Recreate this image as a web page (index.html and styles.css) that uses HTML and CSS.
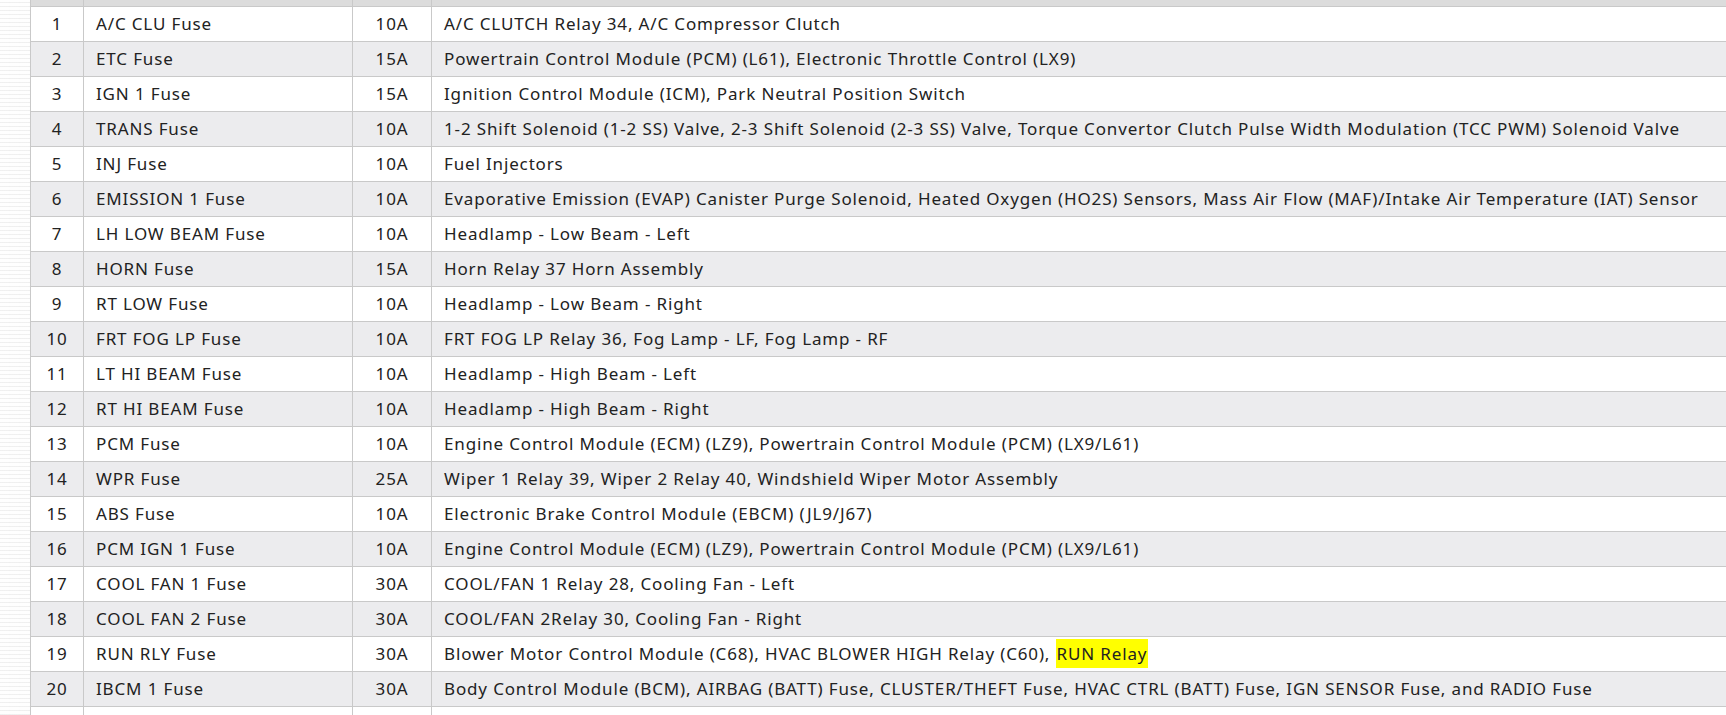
FILE: index.html
```html
<!DOCTYPE html>
<html>
<head>
<meta charset="utf-8">
<link rel="stylesheet" href="styles.css">
</head>
<body>
<div class="page">
  <table class="fuses">
    <colgroup>
      <col class="c-num"><col class="c-name"><col class="c-amp"><col class="c-desc">
    </colgroup>
    <thead>
      <tr class="head"><th></th><th></th><th></th><th></th></tr>
    </thead>
    <tbody>
      <tr><td class="num">1</td><td>A/C CLU Fuse</td><td class="amp">10A</td><td>A/C CLUTCH Relay 34, A/C Compressor Clutch</td></tr>
      <tr><td class="num">2</td><td>ETC Fuse</td><td class="amp">15A</td><td>Powertrain Control Module (PCM) (L61), Electronic Throttle Control (LX9)</td></tr>
      <tr><td class="num">3</td><td>IGN 1 Fuse</td><td class="amp">15A</td><td>Ignition Control Module (ICM), Park Neutral Position Switch</td></tr>
      <tr><td class="num">4</td><td>TRANS Fuse</td><td class="amp">10A</td><td>1-2 Shift Solenoid (1-2 SS) Valve, 2-3 Shift Solenoid (2-3 SS) Valve, Torque Convertor Clutch Pulse Width Modulation (TCC PWM) Solenoid Valve</td></tr>
      <tr><td class="num">5</td><td>INJ Fuse</td><td class="amp">10A</td><td>Fuel Injectors</td></tr>
      <tr><td class="num">6</td><td>EMISSION 1 Fuse</td><td class="amp">10A</td><td>Evaporative Emission (EVAP) Canister Purge Solenoid, Heated Oxygen (HO2S) Sensors, Mass Air Flow (MAF)/Intake Air Temperature (IAT) Sensor</td></tr>
      <tr><td class="num">7</td><td>LH LOW BEAM Fuse</td><td class="amp">10A</td><td>Headlamp - Low Beam - Left</td></tr>
      <tr><td class="num">8</td><td>HORN Fuse</td><td class="amp">15A</td><td>Horn Relay 37 Horn Assembly</td></tr>
      <tr><td class="num">9</td><td>RT LOW Fuse</td><td class="amp">10A</td><td>Headlamp - Low Beam - Right</td></tr>
      <tr><td class="num">10</td><td>FRT FOG LP Fuse</td><td class="amp">10A</td><td>FRT FOG LP Relay 36, Fog Lamp - LF, Fog Lamp - RF</td></tr>
      <tr><td class="num">11</td><td>LT HI BEAM Fuse</td><td class="amp">10A</td><td>Headlamp - High Beam - Left</td></tr>
      <tr><td class="num">12</td><td>RT HI BEAM Fuse</td><td class="amp">10A</td><td>Headlamp - High Beam - Right</td></tr>
      <tr><td class="num">13</td><td>PCM Fuse</td><td class="amp">10A</td><td>Engine Control Module (ECM) (LZ9), Powertrain Control Module (PCM) (LX9/L61)</td></tr>
      <tr><td class="num">14</td><td>WPR Fuse</td><td class="amp">25A</td><td>Wiper 1 Relay 39, Wiper 2 Relay 40, Windshield Wiper Motor Assembly</td></tr>
      <tr><td class="num">15</td><td>ABS Fuse</td><td class="amp">10A</td><td>Electronic Brake Control Module (EBCM) (JL9/J67)</td></tr>
      <tr><td class="num">16</td><td>PCM IGN 1 Fuse</td><td class="amp">10A</td><td>Engine Control Module (ECM) (LZ9), Powertrain Control Module (PCM) (LX9/L61)</td></tr>
      <tr><td class="num">17</td><td>COOL FAN 1 Fuse</td><td class="amp">30A</td><td>COOL/FAN 1 Relay 28, Cooling Fan - Left</td></tr>
      <tr><td class="num">18</td><td>COOL FAN 2 Fuse</td><td class="amp">30A</td><td>COOL/FAN 2Relay 30, Cooling Fan - Right</td></tr>
      <tr><td class="num">19</td><td>RUN RLY Fuse</td><td class="amp">30A</td><td>Blower Motor Control Module (C68), HVAC BLOWER HIGH Relay (C60), <mark class="hl">RUN Relay</mark></td></tr>
      <tr><td class="num">20</td><td>IBCM 1 Fuse</td><td class="amp">30A</td><td>Body Control Module (BCM), AIRBAG (BATT) Fuse, CLUSTER/THEFT Fuse, HVAC CTRL (BATT) Fuse, IGN SENSOR Fuse, and RADIO Fuse</td></tr>
      <tr><td class="num"></td><td></td><td class="amp"></td><td></td></tr>
    </tbody>
  </table>
</div>
</body>
</html>
```

FILE: styles.css
```css
html, body {
  margin: 0;
  padding: 0;
  overflow: hidden;
}

body {
  background-color: #f6f6f6;
  background-image:
    repeating-linear-gradient(0deg, rgba(255,255,255,0.9) 0 3px, rgba(235,235,235,0.6) 3px 4px),
    repeating-linear-gradient(90deg, rgba(255,255,255,0.0) 0 9px, rgba(235,235,235,0.5) 9px 10px);
  font-family: "Noto Sans", "Open Sans", sans-serif;
  color: #222;
}

.page {
  padding-left: 30px;
  width: 1760px;
}

.fuses {
  border-collapse: collapse;
  width: 1760px;
  table-layout: fixed;
  font-size: 17px;
  letter-spacing: 0.85px;
  background: #fff;
}

.c-num { width: 53px; }
.c-name { width: 269px; }
.c-amp { width: 79px; }

.fuses th,
.fuses td {
  border: 1px solid #c9c9c9;
  padding: 0 12px;
  text-align: left;
  white-space: nowrap;
  overflow: hidden;
}

.head th {
  height: 6px;
  padding: 0;
  border-top: none;
  background: #dcdcdc;
}

.fuses td {
  height: 34px;
  line-height: 20px;
}

.fuses tbody tr:nth-child(even) td {
  background: #ececee;
}

.fuses td.num,
.fuses td.amp {
  text-align: center;
  padding: 0;
}

.hl {
  background: #ffff00;
  color: #222;
  padding: 3px 1px;
}
```
